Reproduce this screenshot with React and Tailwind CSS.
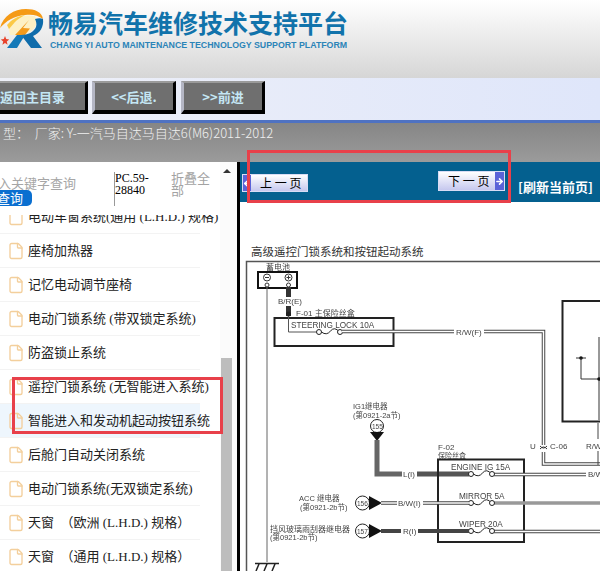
import { File, ArrowLeft, ArrowRight } from 'lucide-react';

const CJK = "font-['Noto_Sans_CJK_SC',sans-serif]";

const MENU = [
  { label: '电动车窗系统(通用 (L.H.D.) 规格)' },
  { label: '座椅加热器' },
  { label: '记忆电动调节座椅' },
  { label: '电动门锁系统 (带双锁定系统)' },
  { label: '防盗锁止系统' },
  { label: '遥控门锁系统 (无智能进入系统)' },
  { label: '智能进入和发动机起动按钮系统', active: true },
  { label: '后舱门自动关闭系统' },
  { label: '电动门锁系统(无双锁定系统)' },
  { label: '天窗　（欧洲 (L.H.D.) 规格）' },
  { label: '天窗　（通用 (L.H.D.) 规格）' },
];

function Logo() {
  return (
    <svg width="44" height="44" viewBox="0 0 44 44" className="shrink-0">
      <path d="M8 18c6-8 14-12 27-10 2 3 2 7 0 11-3 4-8 7-14 8H10z" fill="#fdf0c4" />
      <path d="M0 20C3 8 14 1 26 1c9 0 16 3 17 10-5-4-11-5-18-4C14 8 6 13 0 20z" fill="#f59a16" />
      <path d="M7 17c5-6 11-9 18-10-4 2-8 5-10 7l-6 7z" fill="#fbc945" />
      <path d="M29 12 15 27l8 .5-3 6 10-13-7-.5z" fill="#f39a1b" />
      <path d="M43 11c1 8-3 14-10 17l9 12H31L21 27c7 0 13-3 15-8 1-3 0-6-1-8 3-1 6-1 8 0z" fill="#0f6cab" />
      <path d="M7 40l10-13h8L17 40z" fill="#1479b8" />
      <path d="M5 28l1.200 3 3 .6-2.400 2 .8 3.200L5 35l-2.600 1.800.8-3.200-2.400-2 3-.6z" fill="#e8432c" />
    </svg>
  );
}

function NavButton({ children, className }) {
  return (
    <button className={`h-[33px] border-t-2 border-l-[3px] border-b-[4px] border-r-[3px] border-t-[#9a9a9a] border-l-[#b4b6c4] border-b-black border-r-black bg-[#6f6f6f] text-[13px] font-bold text-[#c4e6f4] ${className}`}>
      {children}
    </button>
  );
}

function MenuRow({ label, active }) {
  return (
    <div className={`flex h-[34px] w-[200px] items-center gap-[3px] border-b border-[#f3f3f3] pl-[7px] whitespace-pre ${active ? 'bg-[#eef6fd]' : ''}`}>
      <File size={18} strokeWidth={1.8} className="shrink-0 text-[#f3cf9c]" />
      <span className="text-[13px] leading-none text-[#222]">{label}</span>
    </div>
  );
}

function Fuse({ x, y }) {
  return (
    <g fill="none" stroke="#222" strokeWidth="1">
      <circle cx={x} cy={y} r="2.500" fill="#fff" />
      <path d={`M${x + 2.5} ${y}q5 4 9-1t9 1`} />
      <circle cx={x + 21} cy={y} r="2.500" fill="#fff" />
    </g>
  );
}

function DoubleWire({ d }) {
  return (
    <g fill="none">
      <path d={d} stroke="#444" strokeWidth="3.500" />
      <path d={d} stroke="#fff" strokeWidth="1.500" />
    </g>
  );
}

function Diagram() {
  const label = { fontFamily: "'Liberation Sans','Noto Sans CJK SC',sans-serif", fill: '#444' };
  return (
    <svg width="360" height="311" viewBox="240 260 360 311" className="blur-[0.3px]" style={label}>
      <path d="M246.500 571V261.500H600" fill="none" stroke="#555" strokeWidth="1.500" />

      {/* battery */}
      <text x="266" y="270" fontSize="8">蓄电池</text>
      <rect x="258" y="272" width="39" height="16" fill="none" stroke="#111" strokeWidth="2" />
      <g fill="none" stroke="#333">
        <circle cx="267" cy="277.500" r="3.500" />
        <circle cx="288.500" cy="277.500" r="3.500" />
        <circle cx="267" cy="285" r="2" />
        <circle cx="288.500" cy="285" r="2" />
        <path d="M265 277.500h4M286.500 277.500h4M288.500 275.500v4" />
      </g>
      <path d="M267 287V562" stroke="#666" fill="none" />
      <path d="M255 563.500h24M259 564l-3 7M267 564l-3 7M275 564l-3 7" stroke="#222" strokeWidth="1.500" fill="none" />
      <path d="M288.500 287v10M288.500 306v10" stroke="#333" strokeWidth="5" fill="none" />
      <text x="278" y="304" fontSize="8">B/R(E)</text>
      <circle cx="288.500" cy="314" r="2.500" fill="#222" />
      <text x="296" y="316" fontSize="8">F-01 主保险丝盒</text>

      {/* steering lock */}
      <rect x="274.500" y="318" width="119" height="28" fill="none" stroke="#222" strokeWidth="2" />
      <text x="291" y="328" fontSize="8.200">STEERING LOCK 10A</text>
      <path d="M288.500 316v16h28" fill="none" stroke="#555" />
      <Fuse x={319} y={332} />
      <DoubleWire d="M342 331.500H454" />
      <text x="456" y="335" fontSize="8">R/W(F)</text>
      <DoubleWire d="M484 331.500H543.500V445M543.500 452V464H600" />
      <text x="530" y="449" fontSize="8">U</text>
      <path d="M540 449q3.500-4 7 0M540 446q3.500 4 7 0" fill="none" stroke="#333" />
      <text x="550" y="449" fontSize="8">C-06</text>

      {/* right block */}
      <path d="M600 301H562.500V421.500H600" fill="none" stroke="#222" strokeWidth="2" />
      <path d="M576 358h10" stroke="#333" />
      <circle cx="581" cy="358" r="1.800" fill="#111" />
      <path d="M581 358v21h19M599 337v83" fill="none" stroke="#333" />
      <circle cx="599" cy="379" r="1.800" fill="#111" />
      <path d="M598 423v16M598 451v14" stroke="#444" fill="none" />
      <text x="586" y="449" fontSize="8">R/W</text>

      {/* IG1 relay */}
      <text x="353" y="409" fontSize="7.500">IG1继电器</text>
      <text x="353" y="418" fontSize="7.500">(第0921-2a节)</text>
      <circle cx="377" cy="426" r="6.500" fill="#fff" stroke="#222" />
      <text x="372" y="428.500" fontSize="6.500">155</text>
      <path d="M370 432h14l-7 9z" fill="#111" />
      <path d="M377 440v34h25" fill="none" stroke="#666" strokeWidth="5" />
      <text x="403" y="477" fontSize="8">L(I)</text>
      <path d="M417 474h52" stroke="#555" strokeWidth="5" fill="none" />

      {/* F-02 fuse box */}
      <text x="438" y="450" fontSize="8">F-02</text>
      <text x="438" y="457.500" fontSize="7">保险丝盒</text>
      <rect x="438" y="459.500" width="86" height="82.500" fill="none" stroke="#222" strokeWidth="2" />
      <text x="451" y="470" fontSize="8.200">ENGINE IG 15A</text>
      <text x="459" y="499" fontSize="8.200">MIRROR 5A</text>
      <text x="459" y="527" fontSize="8.200">WIPER 20A</text>
      <DoubleWire d="M494 474.500H586" />
      <text x="588" y="477" fontSize="8">B/W</text>
      <Fuse x={471} y={474} />
      <path d="M494 503h106" stroke="#999" strokeWidth="3.500" fill="none" />
      <Fuse x={471} y={503} />
      <DoubleWire d="M494 531.500H600" />
      <Fuse x={471} y={531} />

      {/* relay feeds */}
      <text x="299" y="501" fontSize="7.500">ACC 继电器</text>
      <text x="300" y="509.500" fontSize="7.500">(第0921-2b节)</text>
      <circle cx="362.500" cy="503" r="7" fill="#fff" stroke="#222" />
      <text x="357" y="505.500" fontSize="6.500">156</text>
      <path d="M369 496v14l13-7z" fill="#111" />
      <DoubleWire d="M381 503H397" />
      <text x="398" y="506" fontSize="8">B/W(I)</text>
      <DoubleWire d="M423 503H469" />

      <text x="270" y="532" fontSize="8">挡风玻璃雨刮器继电器</text>
      <text x="270" y="540" fontSize="7.500">(第0921-2b节)</text>
      <circle cx="362.500" cy="531" r="7" fill="#fff" stroke="#222" />
      <text x="357" y="533.500" fontSize="6.500">157</text>
      <path d="M369 524v14l13-7z" fill="#111" />
      <path d="M381 531h20M418 531h51" stroke="#444" strokeWidth="4" fill="none" />
      <text x="403" y="534" fontSize="8">R(I)</text>
    </svg>
  );
}

export default function App() {
  return (
    <div className={`relative h-[571px] w-[600px] overflow-hidden bg-white ${CJK}`}>
      {/* header */}
      <header className="flex h-[78px] items-start bg-gradient-to-b from-white to-[#d6d6d6] pt-[8px]">
        <Logo />
        <div className="ml-[4px] -mt-[1px]">
          <div className="text-[25px] leading-[30px] font-bold whitespace-nowrap text-[#1173ab]">畅易汽车维修技术支持平台</div>
          <div className="mt-[1px] ml-[2px] font-['Liberation_Sans',sans-serif] text-[8.800px] leading-[14px] font-bold whitespace-nowrap text-[#2b84b8]">
            CHANG YI AUTO MAINTENANCE TECHNOLOGY SUPPORT PLATFORM
          </div>
        </div>
      </header>

      {/* nav */}
      <nav className="flex h-[45px] items-start gap-[4px] border-b-[3px] border-[#4f72c2] bg-gradient-to-r from-[#eef0f8] to-[#dfe6fa] pt-[3px]">
        <NavButton className="-ml-[4px] w-[92px] text-right pr-[20px] whitespace-nowrap">返回主目录</NavButton>
        <NavButton className="w-[84px]">&lt;&lt;后退.</NavButton>
        <NavButton className="ml-[1px] w-[84px]">&gt;&gt;前进</NavButton>
      </nav>

      {/* vehicle line */}
      <div className="h-[39px] bg-gradient-to-b from-[#868686] to-[#9b9b9b] pt-[1px] pl-[3px] text-[13px] leading-[18px] font-light whitespace-pre text-[#f0f0f0]">
        型：  厂家: Y-一汽马自达马自达6(M6)2011-2012
      </div>

      <div className="flex h-[409px]">
        {/* side tree */}
        <aside className="flex w-[237px] shrink-0 border-r-[3px] border-black box-content">
          <div className="w-[220px] shrink-0 overflow-hidden">
            <div className="relative z-10 flex h-[53px] bg-white">
              <div className="w-[114px] shrink-0 overflow-hidden pt-[13px]">
                <div className="-ml-[15px] text-[13px] leading-[16px] whitespace-nowrap text-[#a6a6a6]">输入关键字查询</div>
                <div className="-mt-[1px] h-[16px] w-[32px] rounded-r-[5px] bg-[#0a6fd0] indent-[-3px] text-[13px] leading-[16px] whitespace-nowrap text-white">查询</div>
              </div>
              <div className="mt-[10px] mb-[9px] w-[57px] shrink-0 border-l border-[#999] font-['Liberation_Serif','Noto_Sans_CJK_SC',serif] text-[12px] leading-[12px] text-black">PC.59-28840</div>
              <div className="mt-[10px] w-[40px] text-[13px] leading-[12px] text-[#a3a3a3]">折叠全部</div>
            </div>
            <div className="-mt-[15px] font-['Liberation_Serif','Noto_Sans_CJK_SC',serif]">
              {MENU.map(item => <MenuRow key={item.label} {...item} />)}
            </div>
          </div>
          <div className="flex w-[17px] shrink-0 flex-col bg-[#fbfbfb]">
            <div className="mt-[7px] ml-[3px] h-0 w-0 border-x-[4px] border-b-[4px] border-x-transparent border-b-[#333]" />
            <div className="mt-auto ml-[1px] h-[213px] w-[11px] bg-[#bdbdbd]" />
          </div>
        </aside>

        {/* page view */}
        <main className="min-w-0 flex-1">
          <div className="flex h-[40px] items-start bg-[#04608f]">
            <button className="mt-[12px] ml-[2px] flex h-[18px] w-[66px] items-center border border-[#d8dcf5] bg-gradient-to-b from-white to-[#c6c8ee] text-[12px] text-black">
              <span className="flex h-full w-[8px] items-center justify-center bg-[#5b63d8] text-white"><ArrowLeft size={9} strokeWidth={4} /></span>
              <span className="ml-[9px] whitespace-pre">上 一 页</span>
            </button>
            <button className="mt-[9px] ml-[130px] flex h-[20px] w-[67px] items-center border border-[#d8dcf5] bg-gradient-to-b from-white to-[#c6c8ee] text-[12px] text-black">
              <span className="ml-[9px] whitespace-pre">下 一 页</span>
              <span className="ml-auto flex h-full w-[9px] items-center justify-center bg-[#5b63d8] text-white"><ArrowRight size={9} strokeWidth={4} /></span>
            </button>
            <span className="mt-[15px] ml-[13px] text-[13px] leading-[20px] font-bold whitespace-nowrap text-white">[刷新当前页]</span>
          </div>
          <div className="h-[58px] pt-[41px] pl-[11px] text-[11.500px] leading-[17px] whitespace-nowrap text-[#333]">高级遥控门锁系统和按钮起动系统</div>
          <Diagram />
        </main>
      </div>

      {/* annotation frames drawn over the screenshot */}
      <div className="absolute top-[150px] left-[247px] h-[53px] w-[264px] border-[3px] border-[#e8404a]" />
      <div className="absolute top-[377px] left-[12px] h-[57px] w-[211px] border-[3px] border-[#e8404a]" />
    </div>
  );
}
